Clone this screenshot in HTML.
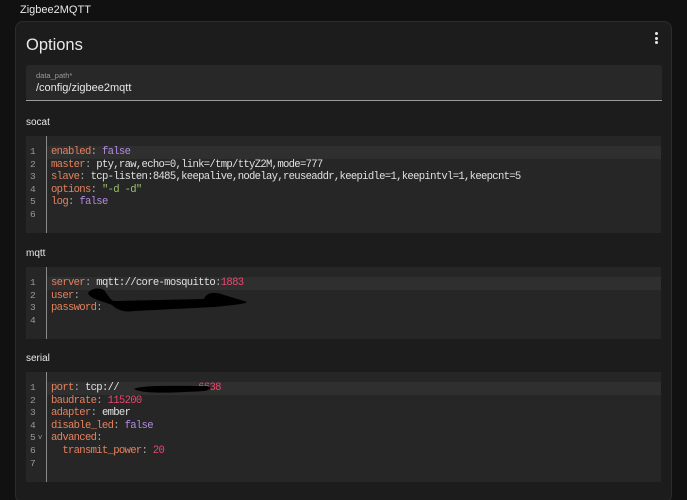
<!DOCTYPE html>
<html><head><meta charset="utf-8"><style>
*{margin:0;padding:0;box-sizing:border-box}
html,body{width:687px;height:500px;overflow:hidden}
body{background:#111111;font-family:"Liberation Sans",sans-serif;color:#e1e1e1;position:relative}
.top{position:absolute;left:20px;top:4px;font-size:11px;color:#e8e8e8}
.card{position:absolute;left:15px;top:21px;width:657px;height:482px;background:#1c1c1c;border:1px solid #2c2c2c;border-radius:8px;overflow:hidden}
.title{position:absolute;left:10px;top:14px;font-size:16.5px;color:#e8e8e8}
.dots{position:absolute;right:13px;top:10px;width:3px}
.dots i{display:block;width:3px;height:3px;background:#e8e8e8;border-radius:50%;margin-bottom:1.5px}
.field{position:absolute;left:10px;top:43px;width:636px;height:36px;background:#282828;border-bottom:1px solid #9a9a9a;border-radius:3px 3px 0 0}
.field .l{position:absolute;left:10px;top:6px;font-size:7.5px;color:#9a9a9a}
.field .v{position:absolute;left:10px;top:17px;font-size:11px;color:#e8e8e8}
.lab{position:absolute;left:10px;font-size:10px;color:#e8e8e8}
.code{position:absolute;left:10px;width:635px;background:#262626;font-family:"Liberation Mono",monospace;font-size:10.6px;letter-spacing:-0.7px;overflow:hidden}
.code .g{position:absolute;left:20px;top:0;bottom:0;width:1px;background:#8a8a8a}
.code .hl{position:absolute;left:21px;right:0;height:12.6px;background:#2f2f2f}
.ln{position:absolute;left:0;height:12.6px;line-height:12.6px;width:100%}
.ln b{position:absolute;left:4px;font-weight:normal;color:#999;font-size:9.5px;letter-spacing:0}
.ln span.t{position:absolute;left:25px;white-space:pre;color:#e0e0e0}
.k{color:#e4825e}.c{color:#aaa}.f{color:#b18be0}.n{color:#e8496d}.s{color:#98c26a}
svg{position:absolute}
</style></head><body>
<div class="top">Zigbee2MQTT</div>
<div class="card">
<div class="title">Options</div>
<div class="dots"><i></i><i></i><i></i></div>
<div class="field"><div class="l">data_path*</div><div class="v">/config/zigbee2mqtt</div></div>
<div class="lab" style="top:95px">socat</div>
<div class="code" style="top:114px;height:97px">
<div class="hl" style="top:10px"></div><div class="g"></div>
<div class="ln" style="top:10px"><b>1</b><span class="t"><span class="k">enabled</span><span class="c">:</span> <span class="f">false</span></span></div>
<div class="ln" style="top:22.6px"><b>2</b><span class="t"><span class="k">master</span><span class="c">:</span> pty,raw,echo=0,link=/tmp/ttyZ2M,mode=777</span></div>
<div class="ln" style="top:35.2px"><b>3</b><span class="t"><span class="k">slave</span><span class="c">:</span> tcp-listen:8485,keepalive,nodelay,reuseaddr,keepidle=1,keepintvl=1,keepcnt=5</span></div>
<div class="ln" style="top:47.8px"><b>4</b><span class="t"><span class="k">options</span><span class="c">:</span> <span class="s">"-d -d"</span></span></div>
<div class="ln" style="top:60.4px"><b>5</b><span class="t"><span class="k">log</span><span class="c">:</span> <span class="f">false</span></span></div>
<div class="ln" style="top:73px"><b>6</b><span class="t"></span></div>
</div>
<div class="lab" style="top:226px">mqtt</div>
<div class="code" style="top:245px;height:72px">
<div class="hl" style="top:10px"></div><div class="g"></div>
<div class="ln" style="top:10px"><b>1</b><span class="t"><span class="k">server</span><span class="c">:</span> mqtt://core-mosquitto<span class="c">:</span><span class="n">1883</span></span></div>
<div class="ln" style="top:22.6px"><b>2</b><span class="t"><span class="k">user</span><span class="c">:</span></span></div>
<div class="ln" style="top:35.2px"><b>3</b><span class="t"><span class="k">password</span><span class="c">:</span></span></div>
<div class="ln" style="top:47.8px"><b>4</b><span class="t"></span></div>
<svg style="left:58px;top:20px" width="180" height="28" viewBox="0 0 180 28"><path d="M4 6 C8 0 20 0 22 6 C26 10 26 14 32 14 L120 12 C122 6 130 4 140 8 L160 14 C170 16 150 18 130 20 L50 24 C40 26 32 22 28 18 C18 14 6 12 4 6Z" fill="#000"/></svg>
</div>
<div class="lab" style="top:331px">serial</div>
<div class="code" style="top:350px;height:110px">
<div class="hl" style="top:10px"></div><div class="g"></div>
<div class="ln" style="top:10px"><b>1</b><span class="t"><span class="k">port</span><span class="c">:</span> tcp://              <span class="n">6638</span></span></div>
<div class="ln" style="top:22.6px"><b>2</b><span class="t"><span class="k">baudrate</span><span class="c">:</span> <span class="n">115200</span></span></div>
<div class="ln" style="top:35.2px"><b>3</b><span class="t"><span class="k">adapter</span><span class="c">:</span> ember</span></div>
<div class="ln" style="top:47.8px"><b>4</b><span class="t"><span class="k">disable_led</span><span class="c">:</span> <span class="f">false</span></span></div>
<div class="ln" style="top:60.4px"><b>5</b><span style="position:absolute;left:12px;color:#999;font-size:7px;letter-spacing:0">v</span><span class="t"><span class="k">advanced</span><span class="c">:</span></span></div>
<div class="ln" style="top:73px"><b>6</b><span class="t">  <span class="k">transmit_power</span><span class="c">:</span> <span class="n">20</span></span></div>
<div class="ln" style="top:85.6px"><b>7</b><span class="t"></span></div>
<svg style="left:106px;top:11px" width="84" height="12" viewBox="0 0 84 12"><path d="M2 6 C10 2 40 3 72 3 C80 3 82 6 72 8 C40 10 10 11 2 6Z" fill="#000"/></svg>
</div>
</div>
</body></html>
